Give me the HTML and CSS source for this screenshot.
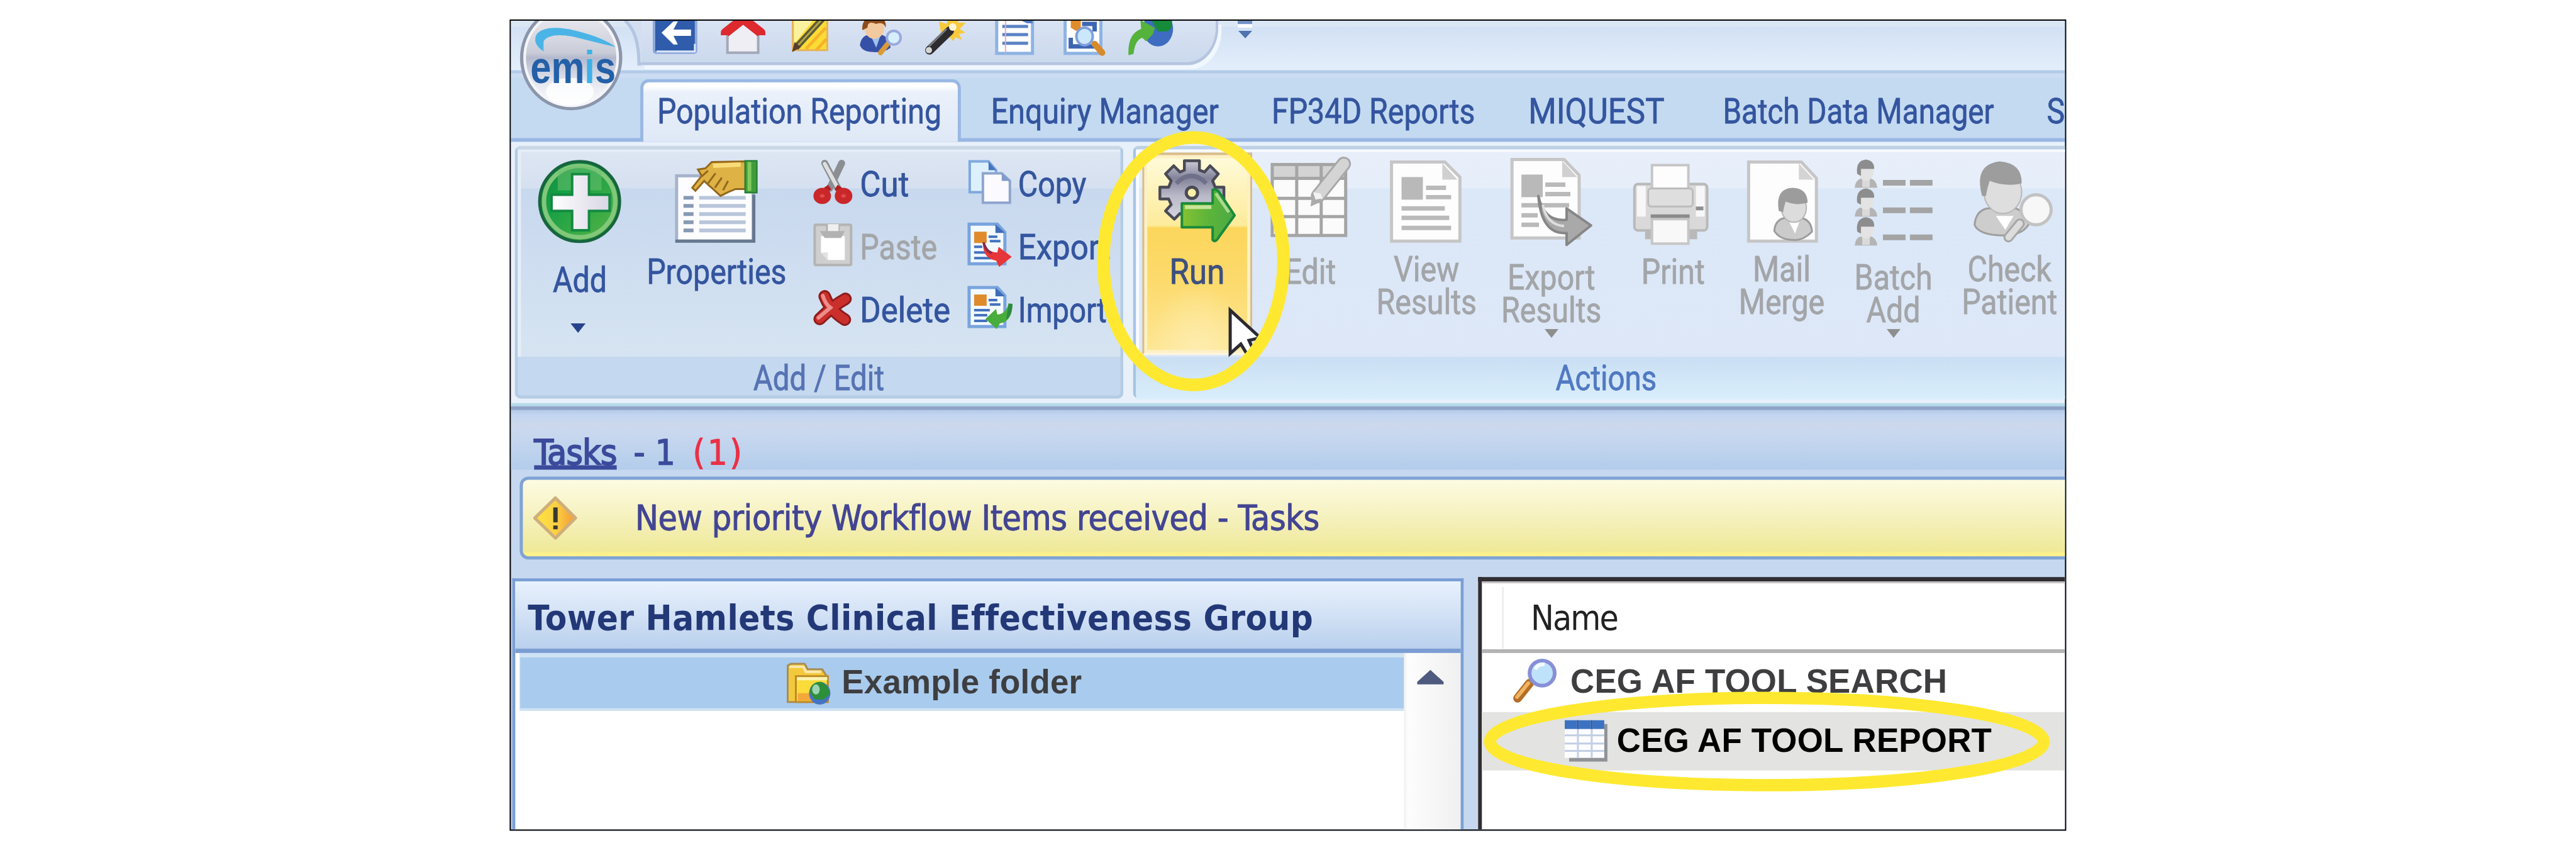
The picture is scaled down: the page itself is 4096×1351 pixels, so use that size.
FILE: index.html
```
<!DOCTYPE html>
<html lang="en">
<head>
  <meta charset="utf-8">
  <title>Population Reporting</title>
  <link rel="stylesheet" href="styles.css">
</head>
<body>
  <div class="window">

    <!-- Title bar with quick access icons -->
    <div class="title-bar">
      <svg class="quick-edge" viewBox="994 33 28 72">
        <path d="M994 33 Q1016 52 1017 102 H1022 V33 Z" fill="#d3dfF1"/>
        <path d="M996 33 Q1018 52 1018 102 H1022" fill="none" stroke="#b3c5e2" stroke-width="5"/>
      </svg>
      <div class="quick-bar">
        <svg class="quick-icon" viewBox="1022 33 108 64">
          <rect x="1042" y="22" width="67" height="62" rx="3" fill="#2f5cab" stroke="#8ea9da" stroke-width="4"/>
          <path d="M1046 82 H1107 V70" fill="none" stroke="#dbe6f7" stroke-width="3"/>
          <path d="M1054 52 L1073 34 H1080 L1073 47 H1101 V57 H1073 L1080 71 H1073 Z" fill="#fff"/>
        </svg>
        <svg class="quick-icon" viewBox="1130 33 108 64">
          <path d="M1159 50 V84 H1208 V50 L1184 30 Z" fill="#efeef4" stroke="#a3a8b8" stroke-width="4"/>
          <path d="M1156 56 V52 L1184 30 L1212 52 V56" fill="none" stroke="#dc2a2f" stroke-width="15" stroke-linejoin="round"/>
        </svg>
        <svg class="quick-icon" viewBox="1238 33 108 64">
          <path d="M1263 25 H1318 V80 H1263 Z" fill="#fbdc35" stroke="#e6b35b" stroke-width="3"/>
          <path d="M1265 27 H1300 L1265 70 Z" fill="#fbf2a0"/>
          <path d="M1284 78 L1316 44 M1300 80 L1317 62" stroke="#f5b32a" stroke-width="5"/>
          <path d="M1268 76 L1312 28" stroke="#5b5a3c" stroke-width="10"/>
          <path d="M1268 76 L1312 28" stroke="#b7a640" stroke-width="3"/>
          <path d="M1262 83 L1266 67 L1276 75 Z" fill="#54402f"/>
        </svg>
        <svg class="quick-icon" viewBox="1346 33 108 64">
          <path d="M1370 72 Q1372 56 1386 55 H1404 Q1416 58 1419 76 Q1410 84 1392 83 Q1374 83 1370 72 Z" fill="#3650a8"/>
          <path d="M1387 56 L1396 76 L1403 56 Z" fill="#9dc3ee"/>
          <ellipse cx="1393" cy="44" rx="16" ry="18" fill="#f3c9a0"/>
          <path d="M1374 48 Q1372 28 1393 26 Q1414 28 1411 44 Q1408 34 1396 38 Q1382 32 1382 44 Z" fill="#8d4b1c"/>
          <path d="M1414 70 L1403 84" stroke="#dc9a35" stroke-width="8" stroke-linecap="round"/>
          <circle cx="1424" cy="60" r="11" fill="#d6efff" stroke="#9ba9de" stroke-width="4"/>
        </svg>
        <svg class="quick-icon" viewBox="1454 33 108 64">
          <path d="M1496 34 L1508 38 L1512 26 H1530 L1526 36 L1539 36 L1529 46 L1538 52 L1528 54 L1533 64 L1522 59 L1519 66 L1512 58 L1500 56 Z" fill="#f8c93a"/>
          <path d="M1481 80 L1513 49" stroke="#2c2c2f" stroke-width="14" stroke-linecap="round"/>
          <path d="M1480 74 L1508 46" stroke="#77787c" stroke-width="3"/>
          <circle cx="1518" cy="43" r="6" fill="#fff6d8"/>
          <circle cx="1480" cy="80" r="5" fill="#d5d5d5"/>
        </svg>
        <svg class="quick-icon" viewBox="1562 33 108 64">
          <rect x="1588" y="20" width="57" height="65" fill="#fff" stroke="#8db3e3" stroke-width="5"/>
          <path d="M1597 42 H1638 M1597 55 H1638 M1597 69 H1638" stroke="#5b82c4" stroke-width="5"/>
          <path d="M1602 22 V84" stroke="#e6a9bd" stroke-width="2"/>
          <path d="M1628 33 H1645 V37 H1636 Z" fill="#4e7cc6"/>
        </svg>
        <svg class="quick-icon" viewBox="1670 33 108 64">
          <rect x="1697" y="20" width="57" height="65" fill="#fff" stroke="#8db3e3" stroke-width="5"/>
          <path d="M1706 26 H1722 V46 L1714 49 L1706 44 Z" fill="#e28d2c"/>
          <path d="M1724 38 H1744 V50 M1706 60 V74 H1744" fill="none" stroke="#3d67b3" stroke-width="7"/>
          <path d="M1744 70 L1756 84" stroke="#d78a2c" stroke-width="10" stroke-linecap="round"/>
          <ellipse cx="1728" cy="58" rx="13" ry="14" fill="#cbe7fb" stroke="#7f9fdc" stroke-width="4"/>
        </svg>
        <svg class="quick-icon" viewBox="1778 33 108 64">
          <ellipse cx="1845" cy="46" rx="24" ry="28" fill="#3d6cc0"/>
          <path d="M1833 30 H1867 Q1869 46 1860 50 L1845 50 Z" fill="#178a3c"/>
          <path d="M1798 88 Q1796 54 1818 46 L1817 32 L1840 44 L1837 54 L1826 66 L1820 60 Q1808 64 1806 86 Z" fill="#55b23b"/>
        </svg>
      </div>
      <svg class="quick-menu" viewBox="1960 33 48 34">
        <path d="M1972 33 H1995 V38 H1972 Z" fill="#7291c2"/>
        <path d="M1972 39 H1995 V44 H1972 Z" fill="#fff"/>
        <path d="M1973 49 H1995 L1984 61 Z" fill="#4f74b0"/>
      </svg>
    </div>

    <!-- Ribbon tabs -->
    <div class="tabs">
      <div class="tab active"><span class="fit">Population Reporting</span></div>
      <div class="tab enquiry"><span class="fit">Enquiry Manager</span></div>
      <div class="tab fp34d"><span class="fit">FP34D Reports</span></div>
      <div class="tab miquest"><span class="fit wide">MIQUEST</span></div>
      <div class="tab batch-data"><span class="fit tight">Batch Data Manager</span></div>
      <div class="tab"><span class="fit">S</span></div>
    </div>

    <!-- Ribbon -->
    <div class="ribbon">
      <div class="group group-edit">
        <div class="group-body">
          <div class="big-button add">
            <svg viewBox="824 243 198 150">
              <defs>
                <linearGradient id="green" x1="0" y1="0" x2="1" y2="1">
                  <stop offset="0" stop-color="#12893f"/>
                  <stop offset=".35" stop-color="#16a046"/>
                  <stop offset="1" stop-color="#5cb544"/>
                </linearGradient>
                <linearGradient id="plus" x1="0" y1="0" x2="1" y2="0">
                  <stop offset="0" stop-color="#ffffff"/>
                  <stop offset="1" stop-color="#d8d6e4"/>
                </linearGradient>
              </defs>
              <circle cx="923" cy="321" r="64" fill="url(#green)" stroke="#17653f" stroke-width="5"/>
              <circle cx="923" cy="321" r="57" fill="none" stroke="#82c77a" stroke-width="7"/>
              <path d="M888 272 Q923 256 958 272 V303 H888 Z" fill="#6cc070" opacity=".55"/>
              <path d="M911 277 H938 V310 H971 V336 H938 V367 H911 V336 H878 V310 H911 Z" fill="url(#plus)" stroke="#138a41" stroke-width="4"/>
            </svg>
            <span class="label low fit">Add</span>
            <svg class="add-arrow" viewBox="0 0 26 16"><path d="M1 0 H25 L13 15 Z" fill="#27428c"/></svg>
          </div>
          <div class="big-button properties">
            <svg viewBox="1022 243 240 150">
              <rect x="1078" y="280" width="122" height="104" fill="#fdfdff" stroke="#a6b3cb" stroke-width="5"/>
              <path d="M1076 384 H1201 V310" fill="none" stroke="#66788f" stroke-width="5"/>
              <path d="M1089 315 H1105 M1089 328 H1105 M1089 341 H1105 M1089 354 H1105 M1089 367 H1105" stroke="#8899b5" stroke-width="6"/>
              <path d="M1114 315 H1188 M1114 328 H1188 M1114 341 H1188 M1114 354 H1188 M1114 367 H1188" stroke="#b9c5da" stroke-width="6"/>
              <path d="M1134 258 L1188 257 V301 H1172 L1160 306 L1148 312 L1136 301 L1128 294 L1122 288 L1108 304 L1103 299 L1118 280 L1112 270 L1124 268 Z" fill="#deb244" stroke="#93681c" stroke-width="3"/>
              <path d="M1136 264 L1180 262" stroke="#f9dc77" stroke-width="7"/>
              <path d="M1128 292 L1140 276 M1139 299 L1150 283 M1152 303 L1160 288 M1118 281 L1128 272" stroke="#93681c" stroke-width="3" fill="none"/>
              <rect x="1187" y="256" width="19" height="51" fill="#3f9c3a" stroke="#1f7a33" stroke-width="2"/>
              <rect x="1191" y="258" width="6" height="46" fill="#82c960"/>
            </svg>
            <span class="label mid fit">Properties</span>
          </div>
          <div class="small-buttons">
            <div class="small-button">
              <svg viewBox="1290 244 76 100">
                <path d="M1314 260 L1335 300" stroke="#8b8f92" stroke-width="11" stroke-linecap="round"/>
                <path d="M1341 260 L1322 300" stroke="#8b8f92" stroke-width="11" stroke-linecap="round"/>
                <path d="M1314 261 L1334 298" stroke="#dedfdf" stroke-width="6" stroke-linecap="round"/>
                <path d="M1322 298 L1311 306 M1332 298 L1344 306" stroke="#b31f22" stroke-width="9"/>
                <ellipse cx="1310" cy="312" rx="9" ry="8" fill="#e04a48" stroke="#c9272a" stroke-width="10"/>
                <ellipse cx="1344" cy="312" rx="9" ry="8" fill="#e04a48" stroke="#c9272a" stroke-width="10"/>
              </svg>
              <span class="fit wide">Cut</span>
            </div>
            <div class="small-button disabled">
              <svg viewBox="1290 344 76 100">
                <rect x="1298" y="358" width="58" height="64" rx="2" fill="#cfcfcf" stroke="#b4b4b4" stroke-width="4"/>
                <path d="M1308 376 H1346 V414 H1319 L1308 402 Z" fill="#fff"/>
                <path d="M1308 402 H1319 V414 Z" fill="#e2e2e2"/>
                <path d="M1306 368 H1316 V359 H1338 V368 H1346 L1340 379 H1314 Z" fill="#b2b2b2"/>
                <path d="M1319 357 H1336 V368 H1319 Z" fill="#efefef"/>
              </svg>
              <span class="fit">Paste</span>
            </div>
            <div class="small-button">
              <svg viewBox="1290 444 76 100">
                <path d="M1314 472 Q1322 494 1346 509 M1347 476 Q1328 486 1306 508" fill="none" stroke="#8e1c1c" stroke-width="20" stroke-linecap="round"/>
                <path d="M1314 472 Q1322 494 1346 509 M1347 476 Q1328 486 1306 508" fill="none" stroke="#cb2f2c" stroke-width="14" stroke-linecap="round"/>
                <path d="M1311 471 Q1315 484 1323 490 L1304 506" fill="none" stroke="#ec8e8a" stroke-width="6" stroke-linecap="round"/>
              </svg>
              <span class="fit wide">Delete</span>
            </div>
          </div>
          <div class="small-buttons second">
            <div class="small-button">
              <svg viewBox="1538 244 81 100">
                <path d="M1546 257 H1576 L1588 271 V306 H1546 Z" fill="#ddf0fd" stroke="#7fa8de" stroke-width="4"/>
                <path d="M1576 257 V271 H1588 Z" fill="#4674bd"/>
                <path d="M1567 276 H1597 L1610 288 V323 H1567 Z" fill="#fafaff" stroke="#8ea5cd" stroke-width="4"/>
                <path d="M1597 276 V288 H1610 Z" fill="#7f9acd"/>
              </svg>
              <span class="fit">Copy</span>
            </div>
            <div class="small-button">
              <svg viewBox="1538 344 81 100">
                <path d="M1545 357 H1590 L1602 370 V420 H1545 Z" fill="#f3faff" stroke="#78a4dd" stroke-width="5"/>
                <path d="M1587 357 V371 H1602 Z" fill="#3f6cb8"/>
                <rect x="1553" y="369" width="20" height="18" fill="#e08b2b"/>
                <path d="M1576 377 H1590 M1578 384 H1595 M1553 393 H1566 M1553 402 H1574 M1553 411 H1582" stroke="#4372c0" stroke-width="4"/>
                <path d="M1567 384 Q1572 402 1590 402 L1592 393 L1613 409 L1593 425 L1588 415 Q1566 412 1567 384 Z" fill="#e7363a"/>
                <path d="M1568 386 Q1572 400 1581 403" fill="none" stroke="#8a2747" stroke-width="4"/>
              </svg>
              <span class="fit wide">Export</span>
            </div>
            <div class="small-button">
              <svg viewBox="1538 444 81 100">
                <path d="M1545 458 H1590 L1602 471 V520 H1545 Z" fill="#f3faff" stroke="#78a4dd" stroke-width="5"/>
                <path d="M1587 458 V472 H1602 Z" fill="#3f6cb8"/>
                <rect x="1553" y="469" width="20" height="18" fill="#e08b2b"/>
                <path d="M1576 478 H1590 M1578 485 H1595 M1553 494 H1578 M1553 502 H1574 M1553 511 H1574" stroke="#4372c0" stroke-width="4"/>
                <path d="M1571 508 L1588 492 L1590 501 Q1604 500 1608 483 L1614 484 Q1614 512 1594 515 L1589 524 Z" fill="#48ad3c"/>
                <path d="M1608 484 L1614 484 Q1614 502 1604 509 Z" fill="#2c8a40"/>
              </svg>
              <span class="fit tight">Import</span>
            </div>
          </div>
        </div>
        <div class="group-title"><span class="fit tight">Add / Edit</span></div>
      </div>

      <div class="group group-actions">
        <div class="group-body">
          <div class="big-button run">
            <svg viewBox="1823 247 169 146">
              <defs>
                <linearGradient id="steel" x1="0" y1="0" x2="0" y2="1">
                  <stop offset="0" stop-color="#c9c9d6"/>
                  <stop offset=".3" stop-color="#83839a"/>
                  <stop offset=".6" stop-color="#b9b9c8"/>
                  <stop offset="1" stop-color="#d6d6e0"/>
                </linearGradient>
                <linearGradient id="arrow" x1="0" y1="0" x2="1" y2="0">
                  <stop offset="0" stop-color="#86c232"/>
                  <stop offset=".5" stop-color="#5cb53a"/>
                  <stop offset="1" stop-color="#4ca944"/>
                </linearGradient>
              </defs>
              <path d="M1887 256 H1911 V271 L1919 274 L1928 264 L1941 277 L1932 288 L1936 298 H1950 V317 H1936 L1932 328 L1941 337 L1928 349 L1918 341 L1911 344 L1887 344 L1880 340 L1871 349 L1857 336 L1866 326 L1862 317 H1848 V298 H1862 L1866 288 L1857 277 L1870 264 L1880 274 L1887 271 Z" fill="url(#steel)" stroke="#4a4a56" stroke-width="4.5" stroke-linejoin="round"/>
              <path d="M1874 292 Q1898 268 1922 292" fill="none" stroke="#70708a" stroke-width="7"/>
              <circle cx="1899" cy="307" r="9" fill="#fdf0a8" stroke="#4a4a56" stroke-width="5"/>
              <path d="M1883 324 H1932 V302 Q1940 300 1945 310 L1967 343 L1943 376 Q1936 388 1932 382 V362 H1883 Z" fill="url(#arrow)" stroke="#1b8a3a" stroke-width="4" stroke-linejoin="round"/>
              <path d="M1888 330 H1930" stroke="#e2efb4" stroke-width="6" opacity=".8"/>
              <path d="M1937 308 L1958 338" stroke="#a9da8d" stroke-width="5"/>
            </svg>
            <span class="label mid fit wide">Run</span>
          </div>
          <div class="big-button edit disabled">
            <svg viewBox="1995 243 186 150">
              <rect x="2027" y="262" width="117" height="113" fill="#fbfbfb"/>
              <rect x="2027" y="262" width="117" height="22" fill="#d3d3d3"/>
              <path d="M2027 262 H2144 V375 H2027 Z M2027 284 H2144 M2027 316 H2144 M2027 345 H2144 M2066 262 V375 M2105 262 V375" fill="none" stroke="#a5a5a5" stroke-width="5"/>
              <path d="M2141 261 L2100 312" stroke="#a8a8a8" stroke-width="23" stroke-linecap="round"/>
              <path d="M2141 261 L2100 312" stroke="#d4d4d4" stroke-width="17" stroke-linecap="round"/>
              <path d="M2091 306 L2088 329 L2108 320 Z" fill="#ababab"/>
              <path d="M2092 306 L2096 318 L2107 316 L2104 308 Z" fill="#f2f2f2"/>
            </svg>
            <span class="label mid fit">Edit</span>
          </div>
          <div class="big-button view disabled">
            <svg viewBox="2181 243 184 150">
              <path d="M2217 258 H2302 L2326 282 V384 H2217 Z" fill="#fdfdfd" stroke="#c6c6c6" stroke-width="5"/>
              <path d="M2298 260 V286 H2322 Z" fill="#d0d0d0"/>
              <rect x="2233" y="282" width="34" height="36" fill="#b9b9b9"/>
              <path d="M2272 299 H2304 M2272 314 H2312 M2233 332 H2302 M2233 347 H2309 M2233 363 H2312" stroke="#bababa" stroke-width="7"/>
            </svg>
            <span class="label high fit">View<br>Results</span>
          </div>
          <div class="big-button export disabled">
            <svg viewBox="2365 243 214 150">
              <path d="M2409 254 H2492 L2516 279 V379 H2409 Z" fill="#fdfdfd" stroke="#c6c6c6" stroke-width="5"/>
              <path d="M2489 256 V282 H2513 Z" fill="#d0d0d0"/>
              <rect x="2424" y="278" width="34" height="36" fill="#b9b9b9"/>
              <path d="M2462 294 H2494 M2462 309 H2502 M2424 327 H2500 M2424 343 H2450 M2424 358 H2452" stroke="#bababa" stroke-width="7"/>
              <path d="M2451 312 Q2460 354 2496 350 V332 L2535 359 L2496 390 V371 Q2456 374 2451 312 Z" fill="#a9a9a9" stroke="#868686" stroke-width="4" stroke-linejoin="round"/>
              <path d="M2458 326 Q2464 358 2492 360" fill="none" stroke="#dedede" stroke-width="4"/>
            </svg>
            <span class="label low fit">Export<br>Results</span>
            <svg class="more" viewBox="0 0 24 15"><path d="M1 0 H23 L12 14 Z" fill="#8e8e8e"/></svg>
          </div>
          <div class="big-button print disabled">
            <svg viewBox="2579 243 174 150">
              <rect x="2604" y="293" width="116" height="74" rx="6" fill="#d9d9d9" stroke="#b9b9b9" stroke-width="4"/>
              <path d="M2608 296 H2622 V345 H2608 Z M2702 296 H2716 V345 H2702 Z" fill="#f7f7f7"/>
              <path d="M2621 367 H2704 V381 H2621 Z" fill="#b9b9b9"/>
              <rect x="2632" y="263" width="58" height="38" fill="#fdfdfd" stroke="#c6c6c6" stroke-width="4"/>
              <rect x="2626" y="300" width="71" height="29" rx="5" fill="#dedede" stroke="#bcbcbc" stroke-width="3"/>
              <path d="M2630 345 H2692" stroke="#8b8b8b" stroke-width="7"/>
              <path d="M2632 349 H2690 V388 H2632 Z" fill="#f8f8f8" stroke="#c6c6c6" stroke-width="4"/>
              <path d="M2702 332 H2714" stroke="#8f8f8f" stroke-width="6"/>
            </svg>
            <span class="label mid fit">Print</span>
          </div>
          <div class="big-button mail disabled">
            <svg viewBox="2753 243 172 150">
              <path d="M2786 258 H2870 L2894 284 V384 H2786 Z" fill="#fdfdfd" stroke="#c6c6c6" stroke-width="5"/>
              <path d="M2866 260 V286 H2890 Z" fill="#d4d4d4"/>
              <path d="M2827 368 Q2828 350 2844 347 H2870 Q2886 351 2887 369 Q2872 384 2857 382 Q2836 382 2827 368 Z" fill="#cbcbcb" stroke="#9c9c9c" stroke-width="3"/>
              <path d="M2849 350 L2860 372 L2868 350 Z" fill="#fff"/>
              <ellipse cx="2858" cy="331" rx="20" ry="23" fill="#dcdcdc" stroke="#b5b5b5" stroke-width="2"/>
              <path d="M2834 336 Q2828 300 2856 299 Q2880 300 2880 323 Q2860 328 2845 321 Q2842 330 2841 338 Z" fill="#9c9c9c"/>
            </svg>
            <span class="label high fit">Mail<br>Merge</span>
          </div>
          <div class="big-button batch disabled">
            <svg viewBox="2925 243 184 150">
              <g id="patient">
                <path d="M2955 299 Q2956 286 2966 284 H2980 Q2990 287 2991 299 Z" fill="#b4b4b4"/>
                <path d="M2967 285 H2979 V298 H2967 Z" fill="#dadada"/>
                <ellipse cx="2973" cy="274" rx="12" ry="14" fill="#e3e3e3"/>
                <path d="M2959 277 Q2956 256 2973 254 Q2987 256 2986 269 H2965 V280 Z" fill="#8d8d8d"/>
              </g>
              <use href="#patient" y="46"/>
              <use href="#patient" y="92"/>
              <path d="M3000 291 H3036 M3043 291 H3079 M3000 335 H3036 M3043 335 H3079 M3000 378 H3036 M3043 378 H3079" stroke="#a4a4a4" stroke-width="9"/>
            </svg>
            <span class="label low fit">Batch<br>Add</span>
            <svg class="more" viewBox="0 0 24 15"><path d="M1 0 H23 L12 14 Z" fill="#8e8e8e"/></svg>
          </div>
          <div class="big-button check disabled">
            <svg viewBox="3109 243 186 150">
              <path d="M3146 358 Q3148 336 3166 332 H3212 Q3228 338 3232 358 Q3220 376 3190 375 Q3152 374 3146 358 Z" fill="#cdcdcd" stroke="#9e9e9e" stroke-width="3"/>
              <path d="M3180 344 L3195 366 L3208 344 Z" fill="#fff"/>
              <ellipse cx="3191" cy="306" rx="30" ry="34" fill="#dedede" stroke="#b8b8b8" stroke-width="2"/>
              <path d="M3158 312 Q3144 262 3186 257 Q3222 260 3221 292 Q3196 298 3170 288 Q3166 300 3164 312 Z" fill="#9d9d9d"/>
              <path d="M3218 356 L3200 378" stroke="#a6a6a6" stroke-width="16" stroke-linecap="round"/>
              <path d="M3218 356 L3200 378" stroke="#dcdcdc" stroke-width="10" stroke-linecap="round"/>
              <circle cx="3244" cy="334" r="24" fill="#f7f7f7" stroke="#c2c2c2" stroke-width="5"/>
            </svg>
            <span class="label high fit">Check<br>Patient</span>
          </div>
        </div>
        <div class="group-title"><span class="fit tight">Actions</span></div>
      </div>
    </div>

    <!-- Task summary and alert -->
    <div class="task-bar">
      <a class="task-link">Tasks</a>
      <span class="task-count">- 1</span>
      <span class="task-urgent">(1)</span>
    </div>
    <div class="alert-area">
      <div class="alert">
        <svg class="alert-icon" viewBox="833 785 110 80">
          <defs>
            <linearGradient id="amber" x1="0" y1="0" x2="1" y2="0">
              <stop offset="0" stop-color="#fbe53f"/>
              <stop offset=".5" stop-color="#fbd245"/>
              <stop offset="1" stop-color="#f39a33"/>
            </linearGradient>
          </defs>
          <path d="M885 793 L917 825 L885 857 L852 825 Z" fill="url(#amber)" stroke="#cfae7c" stroke-width="5" stroke-linejoin="round"/>
          <path d="M885 808 V832 M885 837 V843" stroke="#3a3a2c" stroke-width="7"/>
        </svg>
        <span>New priority Workflow Items received - Tasks</span>
      </div>
    </div>

    <!-- Folder tree and report list -->
    <div class="panes">
      <div class="tree-pane">
        <div class="tree-title"><span>Tower Hamlets Clinical Effectiveness Group</span></div>
        <div class="tree-body">
          <div class="tree-list">
            <div class="tree-row">
              <svg viewBox="1245 1048 91 81">
                <path d="M1255 1119 V1061 L1260 1058 H1282 L1287 1067 H1310 L1316 1076 V1119 Z" fill="#f3c93c" stroke="#a98c56" stroke-width="3"/>
                <path d="M1258 1063 H1280 L1284 1071 H1308" fill="none" stroke="#fbe9b0" stroke-width="4"/>
                <path d="M1268 1078 H1319 V1119 H1268 Z" fill="#fbdc3a" stroke="#bd8a2a" stroke-width="3"/>
                <path d="M1271 1105 H1296 V1117 H1271 Z" fill="#f5a83a"/>
                <path d="M1270 1082 H1318" stroke="#fdf3b0" stroke-width="5"/>
                <ellipse cx="1306" cy="1105" rx="17" ry="18" fill="#4574c4"/>
                <path d="M1290 1103 Q1292 1087 1308 1087 Q1322 1093 1322 1107 L1312 1115 H1298 Z" fill="#2e8f3a"/>
                <ellipse cx="1300" cy="1099" rx="6" ry="8" fill="#9ed3b4"/>
              </svg>
              <span>Example folder</span>
            </div>
          </div>
          <div class="scrollbar">
            <svg viewBox="0 0 44 24"><path d="M22 0 L43 19 V23 H1 V19 Z" fill="#4f5a80"/></svg>
          </div>
        </div>
      </div>
      <div class="list-pane">
        <div class="list-header"><span>Name</span></div>
        <div class="list-row">
          <svg viewBox="2400 1040 102 94">
            <path d="M2437 1088 L2418 1112" stroke="#b56e27" stroke-width="14" stroke-linecap="round"/>
            <path d="M2435 1088 L2417 1110" stroke="#f0b560" stroke-width="6" stroke-linecap="round"/>
            <circle cx="2457" cy="1072" r="20" fill="#bfe2fb" stroke="#8790d6" stroke-width="6"/>
            <path d="M2446 1066 Q2450 1057 2461 1058" fill="none" stroke="#f2faff" stroke-width="6"/>
          </svg>
          <span>CEG AF TOOL SEARCH</span>
        </div>
        <div class="list-row selected">
          <svg viewBox="2484 1134 92 93">
            <path d="M2500 1153 H2561 V1213 H2500 Z" fill="#8f9296"/>
            <rect x="2493" y="1147" width="63" height="60" fill="#fdfdff"/>
            <rect x="2493" y="1147" width="63" height="14" fill="#3d72c2"/>
            <path d="M2514 1147 V1207 M2536 1147 V1207 M2493 1171 H2556 M2493 1184 H2556 M2493 1196 H2556" stroke="#c2cfe4" stroke-width="3"/>
            <path d="M2514 1147 V1161 M2536 1147 V1161" stroke="#2d5ca8" stroke-width="3"/>
          </svg>
          <span>CEG AF TOOL REPORT</span>
        </div>
      </div>
    </div>

    <!-- Application button over the title bar and tabs -->
    <svg class="app-button" viewBox="820 33 180 150">
      <defs>
        <linearGradient id="orb" x1="0" y1="0" x2="0" y2="1">
          <stop offset="0" stop-color="#f1f1f5"/>
          <stop offset=".45" stop-color="#c9ccd8"/>
          <stop offset=".5" stop-color="#b3b9cd"/>
          <stop offset=".75" stop-color="#e6e8f0"/>
          <stop offset="1" stop-color="#ffffff"/>
        </linearGradient>
        <linearGradient id="logo" gradientUnits="userSpaceOnUse" x1="845" y1="0" x2="981" y2="0">
          <stop offset=".635" stop-color="#2360a8"/>
          <stop offset=".635" stop-color="#3db1e8"/>
          <stop offset=".755" stop-color="#3db1e8"/>
          <stop offset=".755" stop-color="#2360a8"/>
        </linearGradient>
      </defs>
      <ellipse cx="910" cy="92" rx="79" ry="81" fill="url(#orb)" stroke="#8b96ab" stroke-width="5"/>
      <ellipse cx="910" cy="92" rx="74" ry="76" fill="none" stroke="#f4f5f9" stroke-width="4"/>
      <ellipse cx="908" cy="146" rx="38" ry="22" fill="#fff" opacity=".8"/>
      <path d="M866 82 Q846 68 856 53 Q872 38 918 49 Q962 60 981 75 Q944 66 912 58 Q874 52 866 66 Z" fill="#4bb4e6"/>
      <text class="logo-text" x="845" y="132" textLength="136" lengthAdjust="spacingAndGlyphs" fill="url(#logo)">emis</text>
    </svg>

    <!-- Mouse pointer and highlight rings -->
    <svg class="marks" viewBox="814 33 2476 1288">
      <path d="M1960 494 V563 L1977 548 L1988 566 L1998 560 L1990 542 L2008 538 Z" fill="#fff" stroke="#2b2a33" stroke-width="5"/>
      <ellipse cx="1901.500" cy="416" rx="143.500" ry="197" fill="none" stroke="#fee930" stroke-width="20"/>
      <ellipse cx="2815" cy="1181" rx="441" ry="69.500" fill="none" stroke="#fee930" stroke-width="19.500"/>
    </svg>
  </div>
</body>
</html>
```
FILE: styles.css
```
html {
  overflow: hidden;
}
body {
  margin: 0;
  width: 4104px;
  height: 1354px;
  background: #fff;
  transform: scale(0.998);
  transform-origin: 0 0;
}
svg {
  display: block;
  flex: none;
}
.window {
  position: relative;
  display: flex;
  flex-direction: column;
  float: left;
  width: 2476px;
  height: 1288px;
  margin: 31px 0 0 812px;
  border: 2px solid #000;
  overflow: hidden;
  background: #c6d8f0;
  font-family: Roboto, sans-serif;
  font-size: 55px;
  color: #34559f;
  white-space: nowrap;
}

/* text squeezed to the narrow ribbon face */
.fit {
  display: inline-block;
  transform: scaleX(0.88);
  transform-origin: left center;
  -webkit-text-stroke: 0.8px;
}
.fit.wide {
  transform: scaleX(0.93);
}
.fit.tight {
  transform: scaleX(0.865);
}
.disabled {
  color: #a3a5a8;
}

/* title bar */
.title-bar {
  display: flex;
  flex: none;
  height: 79px;
  padding-left: 180px;
  border-bottom: 5px solid #b3cbe9;
  background: linear-gradient(#dce7f6 9px, #d2e1f4 10px, #e3eefb 78px);
}
.quick-edge {
  width: 28px;
  height: 72px;
}
.quick-bar {
  display: flex;
  width: 915px;
  height: 66px;
  border-bottom: 5px solid #b5c5e0;
  border-right: 4px solid #b5c5e0;
  border-bottom-right-radius: 50px 60px;
  background: linear-gradient(#d9e3f3, #cbd9ed);
  box-shadow: 5px 6px 0 #f1f7fe;
}
.quick-icon {
  width: 108px;
  height: 64px;
}
.quick-menu {
  width: 48px;
  height: 34px;
  margin-left: 19px;
}

/* tabs */
.tabs {
  display: flex;
  flex: none;
  height: 103px;
  padding-left: 206px;
  border-bottom: 6px solid #99b7e3;
  background: linear-gradient(#ccdcf3 6px, #c4daf1 8px);
}
.tab {
  flex: none;
  padding-top: 30px;
  line-height: 60px;
}
.tab.active {
  box-sizing: border-box;
  width: 511px;
  height: 100px;
  margin-top: 9px;
  padding: 16px 0 0 22px;
  border: 5px solid #98b8e4;
  border-bottom: none;
  border-radius: 14px 14px 0 0;
  background: linear-gradient(#fff 6px, #eaf1fb 16px, #dfe8f6);
}
.tab.enquiry {
  width: 447px;
  margin-left: 48px;
}
.tab.fp34d {
  width: 409px;
}
.tab.miquest {
  width: 310px;
}
.tab.batch-data {
  width: 516px;
}

/* ribbon groups */
.ribbon {
  display: flex;
  flex: none;
  gap: 15px;
  box-sizing: border-box;
  height: 421px;
  padding: 6px 0 7px 6px;
  border-bottom: 5px solid #b7dbe8;
  background: #e8f0fa;
}
.group {
  display: flex;
  flex-direction: column;
  flex: none;
  box-sizing: border-box;
  height: 403px;
  border: 5px solid #b4cce4;
  border-top: 6px solid #cbd7e5;
  border-radius: 10px;
}
.group-edit {
  width: 970px;
  background: #c4d8ef;
}
.group-actions {
  width: 1508px;
  border-color: #a5c5e3;
  border-top-color: #bcd1e4;
}
.group-body {
  display: flex;
  flex: none;
  height: 330px;
  box-sizing: border-box;
}
.group-edit .group-body {
  background: linear-gradient(#dde6f3, #d5e0f0 61px, #c8d8ee 63px, #d6e4f2);
  box-shadow: inset 5px 4px 0 #e6eef8;
}
.group-actions .group-body {
  padding-left: 10px;
  background: linear-gradient(#e8effb, #e6eefa 61px, #dbe8f8 63px, #dde7f7);
  box-shadow: inset 5px 4px 0 #f8fbff;
}
.group-title {
  flex: 1;
  line-height: 68px;
  text-align: center;
  color: #5673b3;
}
.group-actions .group-title {
  color: #5179c2;
  background: linear-gradient(#cadef4, #d9eefb);
}
.group-title .fit {
  transform-origin: center;
}

/* large buttons */
.big-button {
  display: flex;
  flex-direction: column;
  align-items: center;
  flex: none;
  padding-top: 5px;
  line-height: 52px;
  text-align: center;
}
.big-button .fit {
  transform-origin: center;
}
.big-button > svg:first-child {
  width: 100%;
  height: 150px;
}
.label.high {
  margin-top: 10px;
}
.label.mid {
  margin-top: 14px;
}
.label.low {
  margin-top: 23px;
}
.add {
  width: 197px;
}
.add .label {
  margin-top: 27px;
}
.add-arrow {
  width: 26px;
  height: 16px;
  margin: 43px 6px 0 0;
}
.properties {
  width: 240px;
}
.run {
  box-sizing: border-box;
  width: 175px;
  height: 322px;
  margin-top: 5px;
  padding-top: 0;
  border: 3px solid #d9bd85;
  border-top-width: 4px;
  border-bottom-color: #fff6dc;
  color: #3d507f;
  background: radial-gradient(ellipse 80px 110px at 50% 100%, #feedb0, rgba(254, 237, 176, 0) 100%),
    linear-gradient(#fffbdc, #fdeb9a 112px, #fcd65c 116px, #fcda6c 200px, #fde694);
  box-shadow: inset 0 0 0 5px #fdf0c4;
}
.run > svg:first-child {
  height: 146px;
}
.edit {
  width: 186px;
}
.view {
  width: 184px;
}
.export {
  width: 214px;
}
.print {
  width: 174px;
}
.mail {
  width: 172px;
}
.batch {
  width: 184px;
}
.check {
  width: 186px;
}
.more {
  width: 24px;
  height: 15px;
  margin-top: 4px;
}

/* small buttons */
.small-buttons {
  width: 248px;
  margin-left: 28px;
  padding-top: 6px;
}
.small-buttons.second {
  margin-left: 0;
}
.small-button {
  display: flex;
  gap: 4px;
  height: 100px;
  line-height: 100px;
}
.small-button svg {
  width: 76px;
  height: 100px;
}
.second .small-button svg {
  width: 81px;
}

/* task summary */
.task-bar {
  display: flex;
  flex: none;
  box-sizing: border-box;
  height: 101px;
  padding: 37px 0 0 37px;
  border-top: 6px solid #8fa3c8;
  background: linear-gradient(#b5c9e8, #c2d6f1 8px, #ccd8ec 24px, #c9d8ef 36px, #b3cdeb);
  font-family: "DejaVu Sans Condensed", "DejaVu Sans", sans-serif;
  font-size: 56px;
  line-height: 60px;
  color: #3b4a9b;
}
.task-link {
  letter-spacing: -0.5px;
  text-decoration: underline;
  text-decoration-thickness: 7px;
  text-underline-offset: 2px;
  text-decoration-skip-ink: none;
  -webkit-text-stroke: 2px #3b4a9b;
}
.task-count {
  margin-left: 27px;
  -webkit-text-stroke: 1.5px;
}
.task-urgent {
  margin-left: 28px;
  letter-spacing: 3.5px;
  -webkit-text-stroke: 1px;
  color: #ea2f45;
}

/* alert strip */
.alert-area {
  flex: none;
  box-sizing: border-box;
  height: 171px;
  padding: 11px 0 0 14px;
}
.alert {
  display: flex;
  align-items: center;
  box-sizing: border-box;
  height: 132px;
  width: 2500px;
  border: 5px solid #7fa3d3;
  border-radius: 14px;
  background: linear-gradient(#fdfbe2, #f5f1bd 50%, #efe998 93%, #fdf18c 96%);
  font-family: "DejaVu Sans Condensed", "DejaVu Sans", sans-serif;
  font-size: 55px;
  letter-spacing: -0.4px;
  -webkit-text-stroke: 1px;
  color: #434593;
}
.alert-icon {
  width: 110px;
  height: 80px;
  margin-right: 69px;
}

/* lower panes */
.panes {
  display: flex;
  flex: 1;
  gap: 23px;
  padding-left: 2px;
}
.tree-pane {
  display: flex;
  flex-direction: column;
  flex: none;
  box-sizing: border-box;
  width: 1516px;
  margin-top: 2px;
  border: 5px solid #7a9fd6;
  border-bottom: none;
  background: #fff;
}
.tree-title {
  flex: none;
  box-sizing: border-box;
  height: 114px;
  padding: 12px 0 0 20px;
  border-bottom: 7px solid #7c9dd2;
  background: linear-gradient(#e8f1fd, #d2e1f5 50%, #b9d0ed);
  font-family: "DejaVu Sans Condensed", "DejaVu Sans", sans-serif;
  font-size: 56px;
  font-weight: bold;
  letter-spacing: 0.5px;
  line-height: 91px;
  color: #233877;
}
.tree-body {
  display: flex;
  flex: 1;
}
.tree-list {
  width: 1409px;
  padding-left: 7px;
}
.tree-row {
  display: flex;
  height: 81px;
  padding-left: 416px;
  border: solid #d0e3f5;
  border-width: 7px 0 4px 1px;
  background: #a9cbed;
  font: bold 53px/78px "Liberation Sans", sans-serif;
  letter-spacing: 0.2px;
  color: #3e3e40;
}
.tree-row svg {
  width: 91px;
  height: 81px;
  margin-right: 5px;
}
.scrollbar {
  flex: 1;
  padding: 27px 0 0 20px;
  background: linear-gradient(90deg, #f0f0f0, #fdfdfd 6px, #f0f0f0);
}
.scrollbar svg {
  width: 44px;
  height: 24px;
}
.list-pane {
  flex: 1;
  border-left: 6px solid #302e32;
  border-top: 7px solid #302e32;
  background: #fff;
  font: bold 53px/90px "Liberation Sans", sans-serif;
  letter-spacing: 0.2px;
  color: #3e3e40;
}
.list-header {
  display: flex;
  height: 105px;
  border-top: 3px solid #c4c2c4;
  border-bottom: 6px solid #b3b3b3;
  font: 55px/120px "DejaVu Sans Condensed", "DejaVu Sans", sans-serif;
  color: #222;
}
.list-header span {
  height: 98px;
  margin: 6px 0 0 32px;
  padding-left: 43px;
  border-left: 3px solid #eee;
  line-height: 98px;
  letter-spacing: -2px;
}
.list-row {
  display: flex;
  height: 94px;
  padding-left: 39px;
}
.list-row svg {
  width: 102px;
  height: 94px;
}
.list-row.selected {
  height: 93px;
  padding-left: 123px;
  background: #e3e3e1;
  color: #000;
}
.selected svg {
  width: 92px;
  height: 93px;
}

/* overlays */
.app-button {
  position: absolute;
  left: 6px;
  top: 0;
  width: 180px;
  height: 150px;
}
.logo-text {
  font: bold 72px "Liberation Sans", sans-serif;
}
.marks {
  position: absolute;
  left: 0;
  top: 0;
  width: 2476px;
  height: 1288px;
}
```
